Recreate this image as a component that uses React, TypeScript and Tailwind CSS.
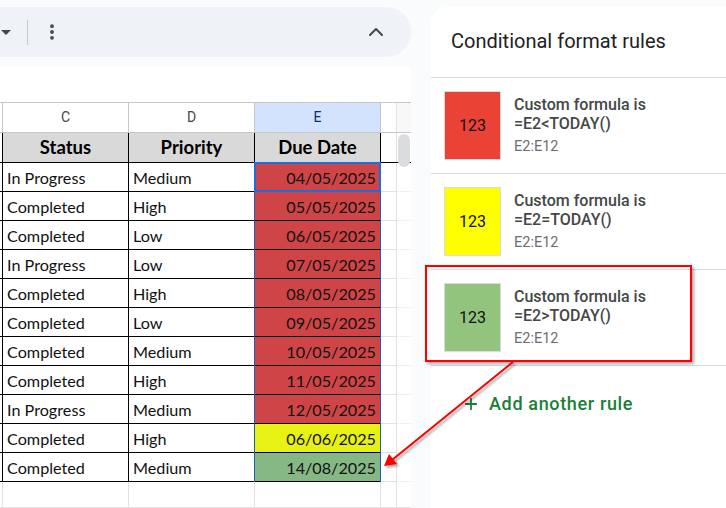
import React from 'react';
import { ChevronUp, EllipsisVertical, Plus } from 'lucide-react';

const tasks = [
  { status: 'In Progress', priority: 'Medium', due: '04/05/2025', color: 'bg-[#cf4547]' },
  { status: 'Completed', priority: 'High', due: '05/05/2025', color: 'bg-[#cf4547]' },
  { status: 'Completed', priority: 'Low', due: '06/05/2025', color: 'bg-[#cf4547]' },
  { status: 'In Progress', priority: 'Low', due: '07/05/2025', color: 'bg-[#cf4547]' },
  { status: 'Completed', priority: 'High', due: '08/05/2025', color: 'bg-[#cf4547]' },
  { status: 'Completed', priority: 'Low', due: '09/05/2025', color: 'bg-[#cf4547]' },
  { status: 'Completed', priority: 'Medium', due: '10/05/2025', color: 'bg-[#cf4547]' },
  { status: 'Completed', priority: 'High', due: '11/05/2025', color: 'bg-[#cf4547]' },
  { status: 'In Progress', priority: 'Medium', due: '12/05/2025', color: 'bg-[#cf4547]' },
  { status: 'Completed', priority: 'High', due: '06/06/2025', color: 'bg-[#e8f114]' },
  { status: 'Completed', priority: 'Medium', due: '14/08/2025', color: 'bg-[#86b886]' },
];

const rules = [
  { formula: '=E2<TODAY()', color: 'bg-[#ea4335]' },
  { formula: '=E2=TODAY()', color: 'bg-[#ffff00]' },
  { formula: '=E2>TODAY()', color: 'bg-[#93c47d]' },
];

const RuleCard = ({ formula, color }: { formula: string; color: string }) => (
  <div className="flex h-[96px] items-center gap-[13px] border-b border-[#dadce0] pl-[13px]">
    <div className={`flex h-[69px] w-[57px] items-center justify-center border border-[#dadce0] text-[16px] text-[#111] ${color}`}>
      123
    </div>
    <div className="text-[16px] leading-[19px] text-[#444746]">
      <div className="font-medium">Custom formula is</div>
      <div className="font-medium">{formula}</div>
      <div className="mt-[4px] text-[14.5px] text-[#6a6e72]">E2:E12</div>
    </div>
  </div>
);

export default function App() {
  return (
    <div className="relative flex h-[508px] w-[726px] overflow-hidden bg-[#f9fbfd] font-['Roboto',sans-serif]">
      {/* Sheet side */}
      <div className="w-[411px] shrink-0 pt-[7px]">
        <div className="flex h-[50px] items-center rounded-r-[25px] bg-[#eff3f8] text-[#444746]">
          <div className="ml-[1px] h-0 w-0 border-x-[5px] border-t-[5px] border-x-transparent border-t-[#444746]" />
          <div className="ml-[16px] h-[25px] w-px bg-[#c7c7c7]" />
          <EllipsisVertical size={20} strokeWidth={2.6} className="ml-[14px]" />
          <ChevronUp size={24} strokeWidth={2} className="ml-auto mr-[23px]" />
        </div>

        <div className="relative mt-[10px] h-[441px] bg-white pt-[35px] font-['Lato',sans-serif] text-[16.2px] text-[#111]">
          {/* column letters */}
          <div className="flex h-[31px] border-y border-[#c7c7c7] font-['Roboto',sans-serif] text-[14px] text-[#444746]">
            <div className="w-[3px] border-r border-[#c7c7c7]" />
            <div className="flex w-[126px] items-center justify-center border-r border-[#c7c7c7]">C</div>
            <div className="flex w-[126px] items-center justify-center border-r border-[#c7c7c7]">D</div>
            <div className="flex w-[126px] items-center justify-center border-r border-[#c7c7c7] bg-[#d3e3fd] text-[#0b2f6b]">E</div>
            <div className="w-[16px] border-r border-[#e1e1e1]" />
            <div className="flex-1 bg-[#f8f8f8]" />
          </div>

          {/* header row */}
          <div className="flex h-[30px] border-b border-black text-[18.5px] font-bold text-black">
            <div className="w-[3px] border-r border-black" />
            <div className="flex w-[126px] items-center justify-center border-r border-black bg-[#d9d9d9] pt-[1px]">Status</div>
            <div className="flex w-[126px] items-center justify-center border-r border-black bg-[#d9d9d9] pt-[1px]">Priority</div>
            <div className="flex w-[126px] items-center justify-center border-r border-black bg-[#d9d9d9] pt-[1px]">Due Date</div>
            <div className="w-[16px] border-r border-[#e1e1e1]" />
          </div>

          {tasks.map((task, index) => (
            <div key={index} className="flex h-[29px]">
              <div className="w-[3px] border-b border-r border-black" />
              <div className="flex w-[126px] items-center border-b border-r border-black pl-[4px] pt-[2px]">{task.status}</div>
              <div className="flex w-[126px] items-center border-b border-r border-black pl-[4px] pt-[2px]">{task.priority}</div>
              <div className={`flex w-[126px] items-center justify-end border-b border-r border-black pr-[4px] pt-[2px] ${task.color}`}>{task.due}</div>
              <div className="w-[16px] border-b border-r border-[#e1e1e1]" />
              <div className="flex-1 border-b border-[#f0f0f0]" />
            </div>
          ))}

          {/* empty row */}
          <div className="flex h-[26px] border-b border-[#e1e1e1]">
            <div className="w-[3px] border-r border-[#e1e1e1]" />
            <div className="w-[126px] border-r border-[#e1e1e1]" />
            <div className="w-[126px] border-r border-[#e1e1e1]" />
            <div className="w-[126px] border-r border-[#e1e1e1]" />
            <div className="w-[16px] border-r border-[#e1e1e1]" />
          </div>

          {/* selected cell and scrollbar thumb */}
          <div className="absolute left-[254px] top-[95px] h-[30px] w-[127px] border-2 border-[#1a6fe0]" />
          <div className="absolute left-[254px] top-[125px] h-[290px] w-[127px] border-x border-[#1a5fb4]" />
          <div className="absolute left-[398px] top-[67px] h-[33px] w-[12px] rounded-full bg-[#dadce0]" />
        </div>
      </div>

      {/* Side panel */}
      <div className="ml-[20px] mt-[7px] flex-1 rounded-tl-[16px] bg-white">
        <div className="flex h-[71px] items-center border-b border-[#dadce0] pb-[2px] pl-[20px] text-[20px] text-[#202124]">
          Conditional format rules
        </div>
        {rules.map((rule) => (
          <RuleCard key={rule.formula} formula={rule.formula} color={rule.color} />
        ))}
        <div className="ml-[31px] mt-[24px] flex items-center gap-[9px] text-[18px] tracking-[0.65px] font-medium text-[#188038]">
          <Plus size={18} strokeWidth={2.4} />
          Add another rule
        </div>
      </div>

      {/* Annotation */}
      <div className="absolute left-[425px] top-[265px] h-[97px] w-[267px] border-[2px] border-[#ff0000] shadow-[2px_2px_3px_rgba(0,0,0,0.35)]" />
      <svg className="absolute left-0 top-0 h-[508px] w-[726px]" viewBox="0 0 726 508" fill="none">
        <g className="drop-shadow-[2px_2px_1px_rgba(0,0,0,0.35)]">
          <line x1="513" y1="362" x2="392" y2="460" stroke="#f80000" strokeWidth="2" />
          <path d="M384 466 L389 454 L397 464 Z" fill="#f80000" />
        </g>
      </svg>
    </div>
  );
}
